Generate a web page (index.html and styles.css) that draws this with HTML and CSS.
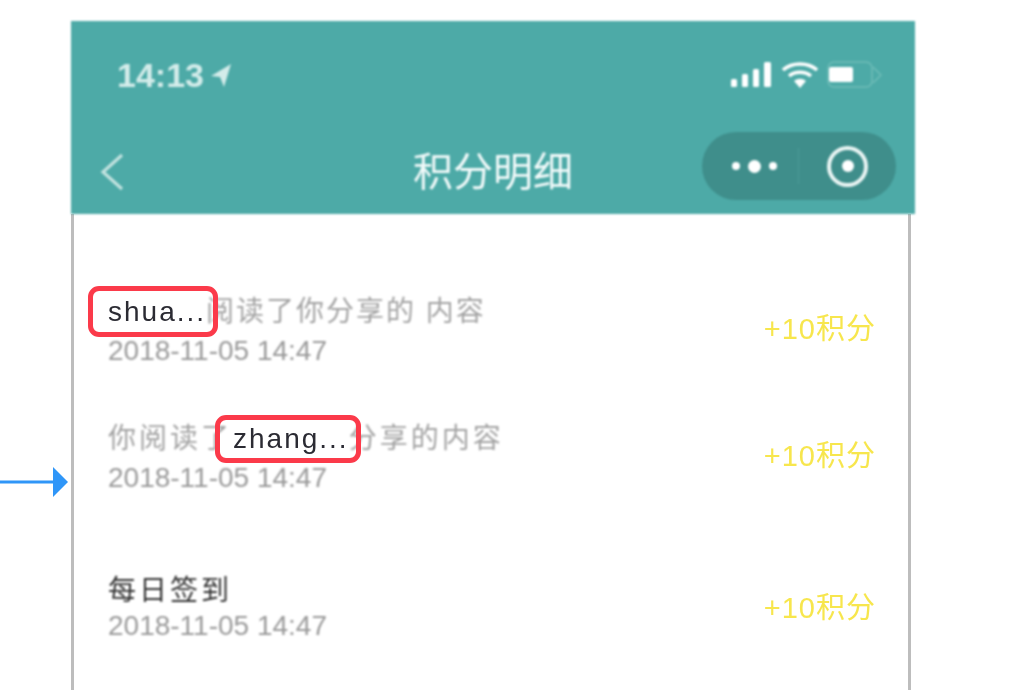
FILE: index.html
```html
<!DOCTYPE html>
<html lang="en">
<head>
    <meta charset="UTF-8">
    <meta name="viewport" content="width=device-width, initial-scale=1.0">
    <title>积分明细</title>
    <link rel="stylesheet" href="styles.css">
</head>
<body>
    <div class="arrow">
        <svg width="70" height="34" viewBox="0 0 70 34">
            <path d="M0 17H56" stroke="#2f96f8" stroke-width="3" fill="none"/>
            <path d="M53 2L68 17L53 32Z" fill="#2f96f8"/>
        </svg>
    </div>
    <div class="phone">
        <div class="header">
            <div class="status-bar">
                <div class="time">
                    14:13
                    <svg width="22" height="25" viewBox="0 0 22 25">
                        <path d="M21 1L1 13L10 14L14 24Z" fill="#d3ecea"/>
                    </svg>
                </div>
                <div class="status-icons">
                    <svg width="42" height="26" viewBox="0 0 42 26">
                        <rect x="0" y="17" width="6" height="8" rx="1.5" fill="#fff"/>
                        <rect x="11" y="12" width="6" height="13" rx="1.5" fill="#fff"/>
                        <rect x="22" y="7" width="6" height="18" rx="1.5" fill="#fff"/>
                        <rect x="33" y="0" width="7" height="25" rx="1.5" fill="#fff"/>
                    </svg>
                    <svg width="36" height="28" viewBox="0 0 36 28">
                        <path d="M1 9C10 1 26 1 35 9" fill="none" stroke="#fff" stroke-width="3.4"/>
                        <path d="M7 15C13 10 23 10 29 15" fill="none" stroke="#fff" stroke-width="3.4"/>
                        <path d="M12 20L18 27L24 20C20 17 16 17 12 20Z" fill="#fff"/>
                    </svg>
                    <svg width="55" height="28" viewBox="0 0 55 28">
                        <rect x="1" y="1" width="44" height="25" rx="6" fill="none" stroke="#6fbdb8" stroke-width="1.5"/>
                        <path d="M46 6L54 14L46 22" fill="none" stroke="#6fbdb8" stroke-width="1.5"/>
                        <rect x="2" y="6" width="24" height="15" rx="2" fill="#fff"/>
                    </svg>
                </div>
            </div>
            <div class="nav-bar">
                <svg class="back" width="26" height="38" viewBox="0 0 26 38">
                    <path d="M23 2L4 19L23 36" fill="none" stroke="#c3e3e0" stroke-width="3.2"/>
                </svg>
                <div class="nav-title">积分明细</div>
                <div class="capsule">
                    <div class="capsule-part dots">
                        <span class="dot"></span>
                        <span class="dot big"></span>
                        <span class="dot"></span>
                    </div>
                    <div class="capsule-part">
                        <span class="ring"><span class="ring-core"></span></span>
                    </div>
                </div>
            </div>
        </div>
        <div class="list">
            <div class="item first">
                <div class="item-text">
                    <div class="item-title muted"><span class="name"><span class="soft">shua...</span><span class="mark"></span></span><span class="soft">阅读了你分享的 内容</span></div>
                    <div class="item-time soft">2018-11-05 14:47</div>
                </div>
                <div class="points">+10积分</div>
            </div>
            <div class="item second">
                <div class="item-text">
                    <div class="item-title muted"><span class="soft">你阅读了</span><span class="name"><span class="soft">zhang...</span><span class="mark"></span></span><span class="soft">分享的内容</span></div>
                    <div class="item-time soft">2018-11-05 14:47</div>
                </div>
                <div class="points">+10积分</div>
            </div>
            <div class="item third">
                <div class="item-text">
                    <div class="item-title"><span class="soft">每日签到</span></div>
                    <div class="item-time soft">2018-11-05 14:47</div>
                </div>
                <div class="points">+10积分</div>
            </div>
        </div>
    </div>
</body>
</html>
```

FILE: styles.css
```css
html, body {
    height: 100%;
}
body {
    margin: 0;
    background-color: #ffffff;
    font-family: 'Liberation Sans', 'Noto Sans CJK SC', sans-serif;
    overflow: hidden;
    position: relative;
}
.phone {
    width: 844px;
    margin: 21px 0 0 71px;
}
.header {
    background: #4daaa7;
    height: 193px;
    color: #ffffff;
    filter: blur(0.8px);
}
.status-bar {
    display: flex;
    justify-content: space-between;
    align-items: center;
    padding: 36px 33px 0 46px;
    height: 36px;
}
.time {
    display: flex;
    align-items: center;
    gap: 6px;
    font-size: 34px;
    font-weight: bold;
    color: #d3ecea;
}
.status-icons {
    display: flex;
    align-items: center;
    gap: 9px;
}
.nav-bar {
    display: grid;
    grid-template-columns: 1fr auto 1fr;
    align-items: center;
    height: 68px;
    margin-top: 39px;
    padding: 0 19px;
}
.back {
    margin: 12px 0 0 9px;
}
.nav-title {
    margin-top: 12px;
    font-size: 40px;
    line-height: 44px;
    color: #f2fafa;
}
.capsule {
    display: flex;
    align-items: center;
    justify-self: end;
    width: 194px;
    height: 68px;
    border-radius: 34px;
    background: #3f8e8b;
}
.capsule-part {
    flex: 0 0 50%;
    box-sizing: border-box;
    display: flex;
    align-items: center;
    justify-content: center;
    gap: 8px;
    height: 36px;
}
.dots {
    border-right: 1px solid #4a9a97;
    padding-left: 8px;
}
.dot {
    width: 8px;
    height: 8px;
    border-radius: 50%;
    background: #ffffff;
}
.dot.big {
    width: 13px;
    height: 13px;
}
.ring {
    display: flex;
    align-items: center;
    justify-content: center;
    width: 41px;
    height: 41px;
    flex-shrink: 0;
    box-sizing: border-box;
    border: 4px solid #eaf5f4;
    border-radius: 50%;
}
.ring-core {
    width: 12px;
    height: 12px;
    border-radius: 50%;
    background: #ffffff;
}
.list {
    width: 765px;
    height: 476px;
    border-left: 3px solid #bdbdbd;
    border-right: 3px solid #bdbdbd;
    padding: 0 34px 0 35px;
}
.item {
    display: flex;
    align-items: center;
    justify-content: space-between;
}
.item.first {
    padding-top: 80px;
}
.item.second {
    padding-top: 53px;
}
.item.third {
    padding-top: 78px;
}
.item-text {
    margin-left: -1px;
}
.soft {
    filter: blur(0.8px);
}
.item-title {
    font-size: 28px;
    line-height: 36px;
    letter-spacing: 3px;
    color: #333333;
}
.item-title .soft {
    display: inline-block;
}
.first .item-title {
    letter-spacing: 2px;
}
.item-title.muted {
    margin-bottom: 4px;
    color: #a3a3a3;
}
.name {
    position: relative;
    margin-left: 1px;
    color: #2b2b33;
    letter-spacing: 2px;
}
.name .soft {
    filter: blur(0.4px);
}
.first .name {
    margin-left: 0;
}
.item-time {
    font-size: 28px;
    line-height: 34px;
    color: #9a9a9a;
}
.points {
    margin-right: -2px;
    padding-bottom: 10px;
    font-size: 29px;
    letter-spacing: 1px;
    color: #f7e64d;
    filter: blur(0.6px);
}
.third .points {
    padding-bottom: 7px;
}
.mark {
    position: absolute;
    z-index: 1;
    left: -18px;
    right: -12px;
    top: -8px;
    bottom: -9px;
    border: 5px solid #fb3a4a;
    border-radius: 11px;
}
.first .mark {
    left: -20px;
    top: -10px;
    bottom: -10px;
}
.arrow {
    position: absolute;
    left: 0;
    top: 465px;
}
```
